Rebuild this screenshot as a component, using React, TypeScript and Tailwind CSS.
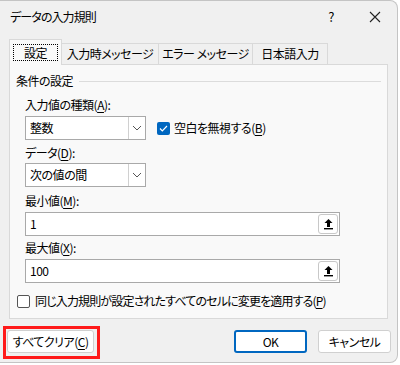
import React from "react";

const font = {
  fontFamily: '"Noto Sans CJK JP", "Noto Sans", sans-serif',
  fontFeatureSettings: '"palt"',
};

function Chevron() {
  return (
    <svg width="10" height="6" viewBox="0 0 10 6" fill="none">
      <path d="M1 1l4 4 4-4" stroke="#555" strokeWidth="1" />
    </svg>
  );
}

function Combo({ value }: { value: string }) {
  return (
    <div className="flex h-[24px] w-[121px] border border-[#a9a9a9] bg-white">
      <div className="flex flex-1 items-center px-[4px] text-black">{value}</div>
      <div className="flex w-[17px] items-center justify-center border-l border-[#d0d0d0]">
        <Chevron />
      </div>
    </div>
  );
}

function RangeInput({ value }: { value: string }) {
  return (
    <div className="flex h-[24px] w-[315px] items-center justify-between border border-[#a9a9a9] bg-white pl-[4px] pr-[1px]">
      <span className="text-black">{value}</span>
      <div className="flex h-[20px] w-[20px] items-center justify-center rounded-[3px] border border-[#c8c8c8] bg-white">
        <svg width="11" height="12" viewBox="0 0 11 12">
          <path d="M5.5 1L1.5 5h2.5v4h3V5h2.5z" fill="#000" />
          <rect x="1" y="10" width="9" height="1.4" fill="#000" />
        </svg>
      </div>
    </div>
  );
}

function Label({ text, k }: { text: string; k: string }) {
  return (
    <div className="leading-[16px] text-black">
      {text}(<span className="underline underline-offset-2">{k}</span>):
    </div>
  );
}

export default function App() {
  return (
    <div className="h-[365px] w-[400px] bg-white text-[12px] tracking-[-0.5px]" style={font}>
      <div className="flex h-[363px] w-[398px] flex-col overflow-hidden rounded-r-[8px] border border-l-0 border-[#c4c4c4] bg-[#f0f0f0]">
        {/* title */}
        <div className="flex h-[31px] items-center justify-between pl-[10px]">
          <span className="tracking-[-0.9px] text-black">データの入力規則</span>
          <div className="flex items-center">
            <span className="w-[44px] text-center text-[13px] text-black">?</span>
            <span className="flex w-[44px] items-center justify-center">
              <svg width="12" height="12" viewBox="0 0 12 12">
                <path d="M1 1l10 10M11 1L1 11" stroke="#222" strokeWidth="1.1" />
              </svg>
            </span>
          </div>
        </div>

        {/* tabs */}
        <div className="mt-[7px] flex items-end whitespace-nowrap pl-[9px]">
          <div className="relative z-10 -mb-[1px] flex h-[26px] w-[53px] items-center justify-center border border-b-0 border-[#d9d9d9] bg-[#f9f9f9]">
            <span className="border border-dotted border-black px-[10px] leading-[15px] text-black">設定</span>
          </div>
          <div className="flex h-[21px] w-[97px] items-center justify-center border border-l-0 border-b-0 border-[#d9d9d9] bg-[#f0f0f0] text-black">入力時メッセージ</div>
          <div className="flex h-[21px] w-[94px] items-center justify-center border border-l-0 border-b-0 border-[#d9d9d9] bg-[#f0f0f0] text-black">エラー メッセージ</div>
          <div className="flex h-[21px] w-[75px] items-center justify-center border border-l-0 border-b-0 border-[#d9d9d9] bg-[#f0f0f0] text-black">日本語入力</div>
        </div>

        {/* panel */}
        <div className="ml-[9px] mr-[9px] flex h-[255px] flex-col border border-[#d9d9d9] bg-[#f9f9f9] px-[6px]">
          <div className="mt-[8px] flex items-center gap-[6px]">
            <span className="leading-[16px] text-black">条件の設定</span>
            <div className="h-px flex-1 bg-[#dcdcdc]" />
          </div>
          <div className="ml-[9px] mt-[8px] flex flex-col">
            <Label text="入力値の種類" k="A" />
            <div className="mt-[3px] flex items-center gap-[11px]">
              <Combo value="整数" />
              <div className="flex items-center gap-[4px]">
                <div className="flex h-[13px] w-[13px] items-center justify-center rounded-[2px] bg-[#0067c0]">
                  <svg width="9" height="7" viewBox="0 0 9 7">
                    <path d="M1 3.5l2.3 2.3L8 1" stroke="#fff" strokeWidth="1.2" fill="none" />
                  </svg>
                </div>
                <span className="text-black">
                  空白を無視する(<span className="underline underline-offset-2">B</span>)
                </span>
              </div>
            </div>
            <div className="mt-[5px]">
              <Label text="データ" k="D" />
            </div>
            <div className="mt-[2px]">
              <Combo value="次の値の間" />
            </div>
            <div className="mt-[6px]">
              <Label text="最小値" k="M" />
            </div>
            <div className="mt-[3px]">
              <RangeInput value="1" />
            </div>
            <div className="mt-[4px]">
              <Label text="最大値" k="X" />
            </div>
            <div className="mt-[3px]">
              <RangeInput value="100" />
            </div>
          </div>
          <div className="mt-[9px] flex items-center gap-[5px] pl-[1px]">
            <div className="h-[13px] w-[13px] rounded-[2px] border border-[#555] bg-white" />
            <span className="tracking-[-0.85px] text-black">
              同じ入力規則が設定されたすべてのセルに変更を適用する(<span className="underline underline-offset-2">P</span>)
            </span>
          </div>
        </div>

        {/* footer */}
        <div className="flex items-start justify-between pl-[3px] pr-[6px] pt-[7px]">
          <div className="border-[3px] border-[#ff1a1a] pb-[3px] pl-[1px] pr-[3px] pt-[1px]">
            <button className="flex h-[23px] w-[87px] items-center justify-center rounded-[3px] border border-[#d0d0d0] bg-white text-black">
              すべてクリア(<span className="underline underline-offset-2">C</span>)
            </button>
          </div>
          <div className="mt-[4px] flex gap-[11px]">
            <button className="flex h-[23px] w-[73px] items-center justify-center rounded-[3px] border-2 border-[#0067c0] bg-white text-black">OK</button>
            <button className="flex h-[23px] w-[73px] items-center justify-center rounded-[3px] border border-[#d0d0d0] bg-white text-black">キャンセル</button>
          </div>
        </div>
      </div>
    </div>
  );
}
